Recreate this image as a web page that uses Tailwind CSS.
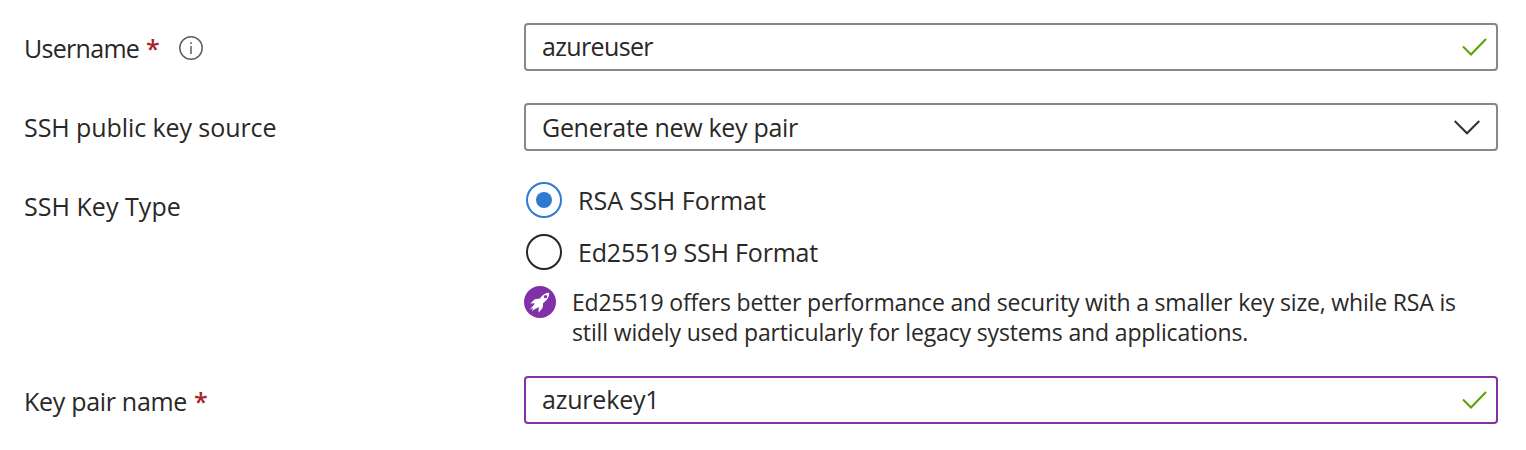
<!DOCTYPE html>
<html lang="en">
<head>
<meta charset="utf-8">
<title>Administrator account</title>
<script src="https://cdn.jsdelivr.net/npm/@tailwindcss/browser@4"></script>
</head>
<body class="bg-white">
<form class="flex h-[450px] w-[1526px] flex-col whitespace-nowrap pl-6 pr-7 pt-[23px] font-['Open_Sans',sans-serif] text-[25px] leading-8 text-[#292827]">
  <div class="flex h-12 items-center">
    <div class="flex w-[500px] items-center pt-[1px]">
      <span class="w-[115px] tracking-[-0.7px]">Username</span>
      <span class="ml-[7px] w-[14px] font-semibold text-[#a4262c]">*</span>
      <svg class="ml-[19px] size-6" viewBox="0 0 24 24" fill="none" stroke="#605e5c" stroke-width="1.5"><circle cx="12" cy="12" r="11.2"/><path d="M12 10V18M12 6.300v1.800"/></svg>
    </div>
    <div class="flex h-12 flex-1 items-center justify-between rounded-[4px] border-2 border-[#8a8886] pl-4 pr-[9px]">
      <span class="pb-[2px] tracking-[-0.65px]">azureuser</span>
      <svg class="h-[18px] w-[25px]" viewBox="0 0 25 18" fill="none" stroke="#57a300" stroke-width="2"><path d="M1 8.5 9 16.5 24 1"/></svg>
    </div>
  </div>
  <div class="mt-8 flex h-12 items-center">
    <span class="w-[500px] tracking-[-0.08px]">SSH public key source</span>
    <div class="flex h-12 flex-1 items-center justify-between rounded-[4px] border-2 border-[#8a8886] pl-4 pr-4">
      <span class="tracking-[-0.3px]">Generate new key pair</span>
      <svg class="h-[15px] w-[26px]" viewBox="0 0 26 15" fill="none" stroke="#323130" stroke-width="2"><path d="M.7 1 13 13.3 25.3 1"/></svg>
    </div>
  </div>
  <div class="mt-[31px] flex h-[168px]">
    <span class="w-[500px] pt-[8px] tracking-[0.04px]">SSH Key Type</span>
    <div class="flex flex-1 flex-col">
      <div class="flex h-9 items-center gap-4 pl-[2px]">
        <svg class="size-9" viewBox="0 0 36 36" fill="none"><circle cx="18" cy="18" r="17" stroke="#3078d4" stroke-width="2"/><circle cx="18" cy="18" r="8" fill="#3078d4"/></svg>
        <span class="tracking-[0px]">RSA SSH Format</span>
      </div>
      <div class="mt-4 flex h-9 items-center gap-4 pl-[2px]">
        <svg class="size-9" viewBox="0 0 36 36" fill="none"><circle cx="18" cy="18" r="17" stroke="#292827" stroke-width="2"/></svg>
        <span class="tracking-[-0.2px]">Ed25519 SSH Format</span>
      </div>
      <div class="mt-4 flex gap-4 text-[23px] leading-[30px]">
        <svg class="size-8 shrink-0" viewBox="0 0 32 32"><circle cx="16" cy="16" r="16" fill="#8031a7"/><path fill="#fff" d="M25.200 6.800C21.500 6.800 18.500 8.800 15.800 12.500L10.800 13.300 6.300 17.600 10.800 17.300 9.600 19.200 5.700 23.500 9 22 8 25 11 23 13 22 14.700 21 14.500 26.700 18.600 22 19.200 17C22.800 14.300 25.500 11 25.200 6.800Z"/><circle cx="21.500" cy="10.700" r="1.600" fill="#8031a7"/></svg>
        <div class="flex flex-col pt-[1px]">
          <span class="tracking-[-0.17px]">Ed25519 offers better performance and security with a smaller key size, while RSA is</span>
          <span class="tracking-[-0.14px]">still widely used particularly for legacy systems and applications.</span>
        </div>
      </div>
    </div>
  </div>
  <div class="mt-[26px] flex h-12 items-center">
    <div class="flex w-[500px] items-center pt-px">
      <span class="w-[163px] tracking-[-0.3px]">Key pair name</span>
      <span class="ml-[7px] font-semibold text-[#a4262c]">*</span>
    </div>
    <div class="flex h-12 flex-1 items-center justify-between rounded-[4px] border-2 border-[#8031a7] pl-4 pr-[9px]">
      <span class="pb-[3px] tracking-[-0.2px]">azurekey1</span>
      <svg class="h-[18px] w-[25px]" viewBox="0 0 25 18" fill="none" stroke="#57a300" stroke-width="2"><path d="M1 8.500 9 16.500 24 1"/></svg>
    </div>
  </div>
</form>
</body>
</html>
